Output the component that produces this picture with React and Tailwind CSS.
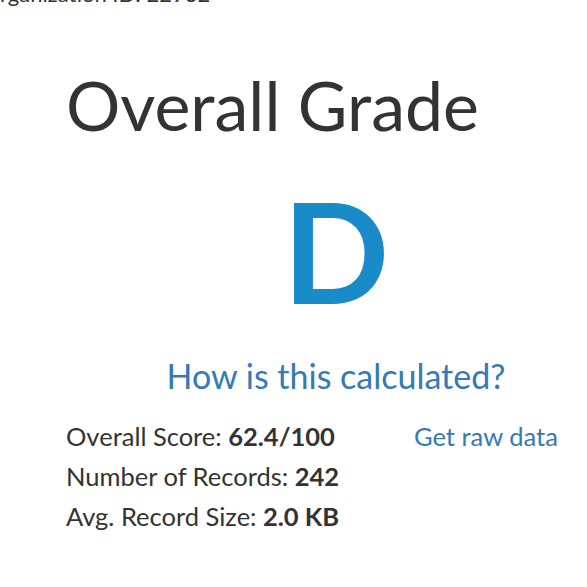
export default function App() {
  return (
    <div className="w-[587px] h-[587px] overflow-hidden bg-white text-[#333] font-['Lato',sans-serif]">
      <p className="-mt-[19px] text-[22px] leading-[25px] text-[#333]">rganization ID: 22932</p>
      <div className="pl-[66px] pt-[54px]">
        <h1 className="text-[68px] leading-[90px] font-normal">Overall Grade</h1>
        <div className="w-[540px] text-center">
          <div className="mt-[30px] text-[140px] leading-[140px] font-bold text-[#1a8bc9]">D</div>
          <a className="block mt-[34px] text-[34px] leading-[44px] text-[#337ab7]">How is this calculated?</a>
        </div>
        <div className="mt-[18px] flex text-[25.5px]">
          <div className="w-[348px] leading-[40px]">
            <p>Overall Score: <b>62.4/100</b></p>
            <p>Number of Records: <b>242</b></p>
            <p>Avg. Record Size: <b>2.0 KB</b></p>
          </div>
          <a className="leading-[40px] text-[#337ab7]">Get raw data</a>
        </div>
      </div>
    </div>
  );
}
